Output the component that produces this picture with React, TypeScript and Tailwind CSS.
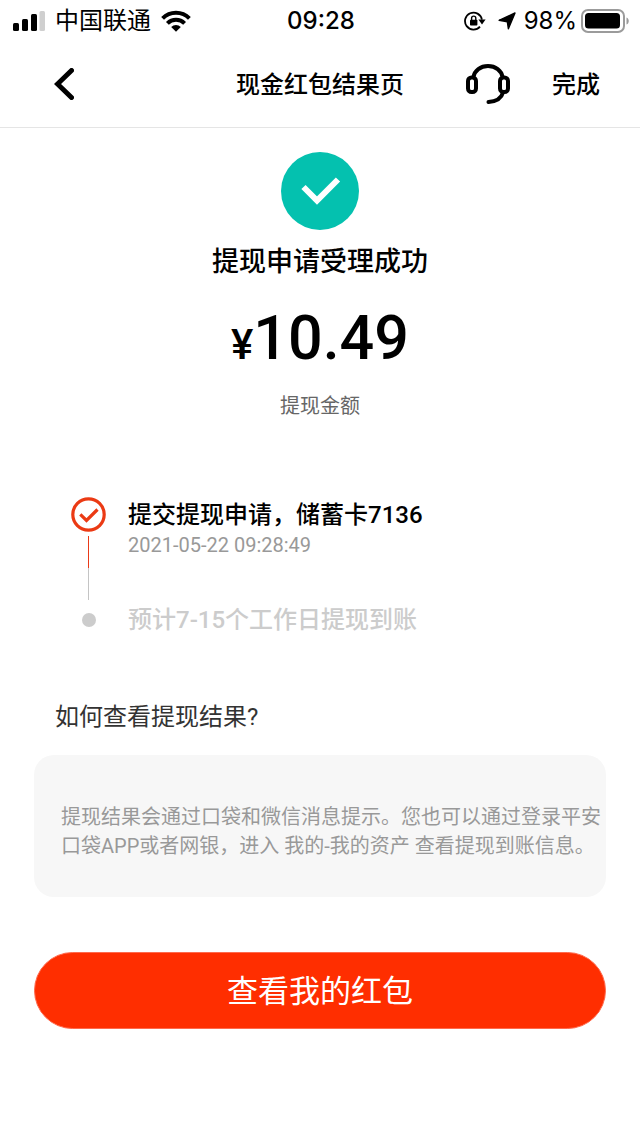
import React from 'react';

interface Step {
  title: string;
  time?: string;
  done: boolean;
}

const steps: Step[] = [
  { title: '提交提现申请，储蓄卡7136', time: '2021-05-22 09:28:49', done: true },
  { title: '预计7-15个工作日提现到账', done: false },
];

function SignalIcon() {
  return (
    <svg className="h-5 w-8" viewBox="0 0 32 20" aria-hidden="true">
      <rect x="0" y="12" width="6" height="8" rx="1.5" />
      <rect x="9" y="8" width="6" height="12" rx="1.5" />
      <rect x="18" y="3" width="6" height="17" rx="1.5" />
      <rect x="26.5" y="0" width="5.5" height="20" rx="1.5" fill="#cfcfcf" />
    </svg>
  );
}

function WifiIcon() {
  return (
    <svg className="h-[22px] w-[30px]" viewBox="0 0 30 22" fill="none" stroke="currentColor" strokeWidth="4" aria-hidden="true">
      <path d="M1.6 8.4a19 19 0 0 1 26.8 0" />
      <path d="M6.4 13.4a12.2 12.2 0 0 1 17.2 0" />
      <path d="M10.2 17.1a6.8 6.8 0 0 1 9.6 0L15 21.8z" fill="currentColor" stroke="none" />
    </svg>
  );
}

function RotationLockIcon() {
  return (
    <svg className="h-5 w-[22px]" viewBox="0 0 22 20" fill="none" stroke="currentColor" strokeWidth="1.8" aria-hidden="true">
      <path d="M16 15.6A8.5 8.5 0 1 1 17.9 8.6" />
      <path d="M14.4 8.4h7.2L18 13.4z" fill="currentColor" stroke="none" />
      <rect x="6" y="8.8" width="7.4" height="5.8" rx="0.8" fill="currentColor" stroke="none" />
      <path d="M7.6 9V7.2a2.1 2.1 0 0 1 4.2 0V9" strokeWidth="1.4" />
    </svg>
  );
}

function LocationIcon() {
  return (
    <svg className="h-[18px] w-[18px]" viewBox="0 0 18 18" fill="currentColor" stroke="currentColor" strokeWidth="1.4" strokeLinejoin="round" aria-hidden="true">
      <path d="M17 1 10.4 16.8 9.3 9.7 1.1 8.3z" />
    </svg>
  );
}

function BatteryIcon() {
  return (
    <svg className="h-6 w-12" viewBox="0 0 48 24" aria-hidden="true">
      <rect x="1" y="1" width="42" height="22" rx="6" fill="none" stroke="#9b9b9b" strokeWidth="2" />
      <rect x="4" y="4" width="35" height="15.5" rx="3.5" />
      <path d="M45.5 8.5c3 1 3 6 0 7z" fill="#9b9b9b" />
    </svg>
  );
}

function HeadsetIcon() {
  return (
    <svg className="h-10 w-11" viewBox="0 0 44 40" fill="none" stroke="currentColor" strokeWidth="4" strokeLinecap="round" aria-hidden="true">
      <path d="M7.5 13C8.5 6.5 14.5 2 22 2s13.5 4.5 14.5 11" />
      <rect x="2" y="13.5" width="8" height="14.5" rx="3.5" />
      <rect x="34" y="13.5" width="8" height="14.5" rx="3.5" />
      <path d="M37 28.5c-1.5 5.5-7 9-14.5 9.500" />
    </svg>
  );
}

function StatusBar() {
  return (
    <div className="grid h-10 grid-cols-[1fr_auto_1fr] items-center pl-[13px] pr-[11px] pt-0.5 font-['Inter','Noto_Sans_CJK_SC',sans-serif] text-2xl leading-8">
      <div className="flex items-center gap-[10px]">
        <SignalIcon />
        <span>中国联通</span>
        <WifiIcon />
      </div>
      <span className="font-medium">09:28</span>
      <div className="flex items-center justify-end">
        <RotationLockIcon />
        <span className="ml-3">
          <LocationIcon />
        </span>
        <span className="ml-2 mr-1">98%</span>
        <BatteryIcon />
      </div>
    </div>
  );
}

function Header() {
  return (
    <header className="grid h-22 grid-cols-[1fr_auto_1fr] items-center border-b border-[#e5e5e5] px-10 text-2xl font-medium">
      <button type="button" aria-label="返回" className="ml-[14px] w-5">
        <svg className="h-8 w-5" viewBox="0 0 20 32" fill="none" stroke="currentColor" strokeWidth="5" strokeLinecap="round" aria-hidden="true">
          <path d="M17.5 2.5 3.5 16l14 13.5" />
        </svg>
      </button>
      <h1 className="pt-0.5">现金红包结果页</h1>
      <div className="flex items-center justify-end gap-[42px]">
        <button type="button" aria-label="客服">
          <HeadsetIcon />
        </button>
        <button type="button" className="pt-0.5">完成</button>
      </div>
    </header>
  );
}

function Result() {
  return (
    <section className="flex flex-col items-center pt-6">
      <svg className="h-[78px] w-[78px]" viewBox="0 0 78 78" aria-hidden="true">
        <circle cx="39" cy="39" r="39" fill="#04c1af" />
        <path d="M22.5 35 36 48.5 57 27.5" fill="none" stroke="#fff" strokeWidth="6" />
      </svg>
      <h2 className="mt-3 text-[27px] font-medium leading-10">提现申请受理成功</h2>
      <p className="mt-5 flex items-baseline font-medium leading-[72px]">
        <span className="text-[42px]">¥</span>
        <span className="text-[61px]">10.49</span>
      </p>
      <p className="mt-[10px] text-xl leading-[30px] text-[#666]">提现金额</p>
    </section>
  );
}

function Timeline() {
  return (
    <ol className="mt-[76px] pl-[71px] pr-8">
      {steps.map((step) => (
        <li key={step.title} className="flex gap-[22px]">
          <div className="flex w-[35px] flex-col items-center">
            {step.done ? (
              <>
                <svg className="h-[35px] w-[35px]" viewBox="0 0 35 35" fill="none" stroke="#eb3a14" strokeWidth="3.2" aria-hidden="true">
                  <circle cx="17.5" cy="17.5" r="15.7" />
                  <path d="m9.3 17.3 6.2 6.2L26.5 12.5" />
                </svg>
                <span className="mt-1 h-8 w-px bg-[#ea3a18]" />
                <span className="h-8 w-px bg-[#c4c4c4]" />
              </>
            ) : (
              <span className="mt-[13px] h-3.5 w-3.5 rounded-full bg-[#ccc]" />
            )}
          </div>
          <div className={step.done ? '' : 'pt-0.5 text-[#ccc]'}>
            <p className="text-2xl font-medium leading-9">{step.title}</p>
            {step.time && <p className="text-xl leading-6 text-[#999]">{step.time}</p>}
          </div>
        </li>
      ))}
    </ol>
  );
}

function HelpInfo() {
  return (
    <section className="mt-[61px] px-[34px]">
      <h3 className="pl-[21px] text-2xl leading-9 text-[#333]">如何查看提现结果?</h3>
      <div className="mt-5 rounded-[20px] bg-[#f7f7f7] pb-9 pl-[27px] pr-1 pt-12">
        <p className="text-xl leading-[29px] text-[#999]">
          提现结果会通过口袋和微信消息提示。您也可以通过登录平安口袋APP或者网银，进入 我的-我的资产 查看提现到账信息。
        </p>
      </div>
    </section>
  );
}

export default function App() {
  return (
    <div className="min-h-screen bg-white font-['Roboto','Noto_Sans_CJK_SC',sans-serif] text-black" lang="zh-CN">
      <StatusBar />
      <Header />
      <main>
        <Result />
        <Timeline />
        <HelpInfo />
        <div className="px-[34px] pt-[55px]">
          <button type="button" className="h-[77px] w-full rounded-full border border-[#ff6a4d] bg-[#ff2e00] pt-1 text-[31px] text-white">
            查看我的红包
          </button>
        </div>
      </main>
    </div>
  );
}
